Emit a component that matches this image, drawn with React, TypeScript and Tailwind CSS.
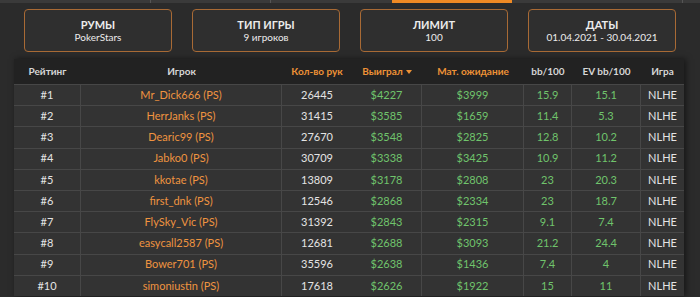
import React from 'react'

const rows = [
  ['#1', 'Mr_Dick666 (PS)', '26445', '$4227', '$3999', '15.9', '15.1'],
  ['#2', 'HerrJanks (PS)', '31415', '$3585', '$1659', '11.4', '5.3'],
  ['#3', 'Dearic99 (PS)', '27670', '$3548', '$2825', '12.8', '10.2'],
  ['#4', 'Jabko0 (PS)', '30709', '$3338', '$3425', '10.9', '11.2'],
  ['#5', 'kkotae (PS)', '13809', '$3178', '$2808', '23', '20.3'],
  ['#6', 'first_dnk (PS)', '12546', '$2868', '$2334', '23', '18.7'],
  ['#7', 'FlySky_Vic (PS)', '31392', '$2843', '$2315', '9.1', '7.4'],
  ['#8', 'easycall2587 (PS)', '12681', '$2688', '$3093', '21.2', '24.4'],
  ['#9', 'Bower701 (PS)', '35596', '$2638', '$1436', '7.4', '4'],
  ['#10', 'simoniustin (PS)', '17618', '$2626', '$1922', '15', '11'],
]

const filters = [
  { title: 'РУМЫ', value: 'PokerStars' },
  { title: 'ТИП ИГРЫ', value: '9 игроков' },
  { title: 'ЛИМИТ', value: '100' },
  { title: 'ДАТЫ', value: '01.04.2021 - 30.04.2021' },
]

function App() {
  return (
    <div className="w-[700px] h-[297px] overflow-hidden bg-[#2b2b2b] font-['Lato','Noto_Sans',sans-serif]">
      {/* хвост вкладок сверху */}
      <div className="flex h-[3px] bg-[#3a3a3a]">
        <div className="w-[151px] border-r border-[#555]"></div>
        <div className="w-[120px] border-r border-[#555]"></div>
        <div className="w-[121px]"></div>
        <div className="w-[120px] bg-[#f08a24]"></div>
        <div className="w-[171px] border-r border-[#555]"></div>
      </div>

      <div className="flex gap-[20px] pl-[24px] pt-[6px]">
        {filters.map(f => (
          <div
            key={f.title}
            className="w-[148px] h-[43px] rounded-[4px] border border-[#a86a35] bg-[#2f2f2f] flex flex-col items-center justify-center text-[#ececec] leading-[13px]"
          >
            <div className="text-[11px] font-bold">{f.title}</div>
            <div className="text-[10px]">{f.value}</div>
          </div>
        ))}
      </div>

      <div className="ml-[14px] mt-[7px] w-[670px] shadow-[2px_0_6px_rgba(0,0,0,0.5)]">
        <div className="flex h-[25px] items-center bg-[#222222] text-[10px] font-bold text-[#d6d6d6]">
          <div className="w-[67px] text-center">Рейтинг</div>
          <div className="w-[201px] text-center">Игрок</div>
          <div className="w-[70px] text-center text-[#ee9236]">Кол-во рук</div>
          <div className="w-[70px] text-center text-[#ee9236]">
            Выиграл
            <span className="ml-[3px] inline-block align-middle border-x-[3px] border-t-[4px] border-x-transparent border-t-[#ee9236]"></span>
          </div>
          <div className="w-[102px] text-center text-[#ee9236]">Мат. ожидание</div>
          <div className="w-[48px] text-center">bb/100</div>
          <div className="w-[69px] text-center">EV bb/100</div>
          <div className="w-[43px] text-center">Игра</div>
        </div>
        {rows.map(r => (
          <div key={r[0]} className="flex h-[21.2px] items-center bg-[#333333] border-t border-[#474747] text-[11px]">
            <div className="w-[67px] h-full flex items-center justify-center border-r border-[#474747] text-[#e4e4e4]">{r[0]}</div>
            <div className="w-[201px] h-full flex items-center justify-center border-r border-[#474747] text-[#ef9440]">{r[1]}</div>
            <div className="w-[70px] h-full flex items-center justify-center text-[#e4e4e4]">{r[2]}</div>
            <div className="w-[70px] h-full flex items-center justify-center border-r border-[#474747] text-[#70c46c]">{r[3]}</div>
            <div className="w-[102px] h-full flex items-center justify-center border-r border-[#474747] text-[#70c46c]">{r[4]}</div>
            <div className="w-[48px] h-full flex items-center justify-center border-r border-[#474747] text-[#70c46c]">{r[5]}</div>
            <div className="w-[69px] h-full flex items-center justify-center border-r border-[#474747] text-[#70c46c]">{r[6]}</div>
            <div className="w-[43px] h-full flex items-center justify-center text-[#e4e4e4]">NLHE</div>
          </div>
        ))}
      </div>
    </div>
  )
}

export default App
